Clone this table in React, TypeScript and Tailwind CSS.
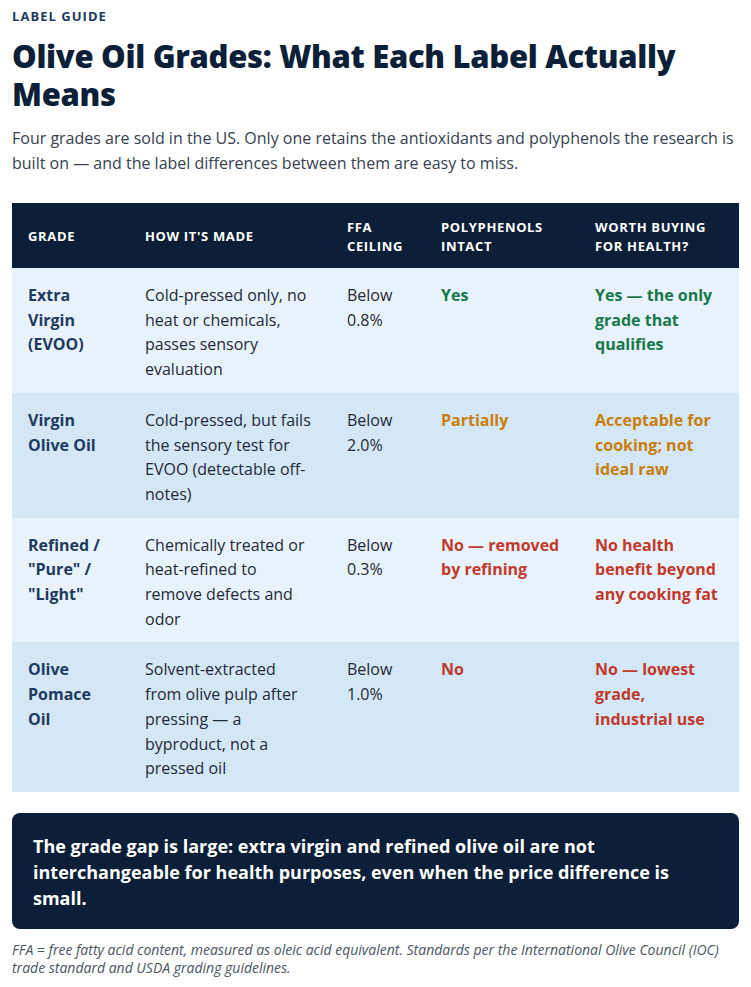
import React from "react";

type Row = {
    grade: string;
    made: string;
    ffa: string;
    poly: string;
    worth: string;
    tone: "good" | "mid" | "bad";
};

const rows: Row[] = [
    {
        grade: "Extra Virgin (EVOO)",
        made: "Cold-pressed only, no heat or chemicals, passes sensory evaluation",
        ffa: "Below 0.8%",
        poly: "Yes",
        worth: "Yes — the only grade that qualifies",
        tone: "good",
    },
    {
        grade: "Virgin Olive Oil",
        made: "Cold-pressed, but fails the sensory test for EVOO (detectable off-notes)",
        ffa: "Below 2.0%",
        poly: "Partially",
        worth: "Acceptable for cooking; not ideal raw",
        tone: "mid",
    },
    {
        grade: 'Refined / "Pure" / "Light"',
        made: "Chemically treated or heat-refined to remove defects and odor",
        ffa: "Below 0.3%",
        poly: "No — removed by refining",
        worth: "No health benefit beyond any cooking fat",
        tone: "bad",
    },
    {
        grade: "Olive Pomace Oil",
        made: "Solvent-extracted from olive pulp after pressing — a byproduct, not a pressed oil",
        ffa: "Below 1.0%",
        poly: "No",
        worth: "No — lowest grade, industrial use",
        tone: "bad",
    },
];

const toneClass = {
    good: "text-[#17784a]",
    mid: "text-[#c97d0b]",
    bad: "text-[#c0392b]",
};

const headers = [
    { label: "Grade", w: "w-[117px]" },
    { label: "How it's made", w: "w-[202px]" },
    { label: "FFA ceiling", w: "w-[94px]" },
    { label: "Polyphenols intact", w: "w-[154px]" },
    { label: "Worth buying for health?", w: "" },
];

const App = () => {
    return (
        <div
            className="bg-white px-3 pt-[7px] pb-4 text-[#1f2937]"
            style={{ fontFamily: '"Open Sans", "Noto Sans", sans-serif' }}
        >
            <div className="text-[13px] font-bold uppercase tracking-[0.08em] text-[#1e3a5f] leading-[18px]">
                Label Guide
            </div>
            <h1 className="mt-[12px] text-[31px] font-extrabold leading-[38px] text-[#0b1f38] tracking-[-0.01em]">
                Olive Oil Grades: What Each Label Actually Means
            </h1>
            <p className="mt-[13px] text-[16px] leading-[25px] text-[#374151]">
                Four grades are sold in the US. Only one retains the antioxidants and polyphenols the research is built on — and the label differences between them are easy to miss.
            </p>

            <table className="mt-[27px] w-full border-collapse text-left">
                <thead>
                    <tr className="bg-[#0b1f38] text-white">
                        {headers.map((h) => (
                            <th
                                key={h.label}
                                className={`${h.w} px-4 pt-[15px] pb-[13px] text-[13px] font-bold uppercase tracking-[0.05em] leading-[18.5px] align-middle`}
                            >
                                {h.label}
                            </th>
                        ))}
                    </tr>
                </thead>
                <tbody>
                    {rows.map((r, i) => (
                        <tr
                            key={r.grade}
                            className={i % 2 === 0 ? "bg-[#e8f2fb]" : "bg-[#d3e7f7]"}
                        >
                            <td className="px-4 pt-[15px] pb-[11px] align-top text-[16px] leading-[24.7px] font-bold text-[#1e3a5f]">
                                {r.grade}
                            </td>
                            <td className="px-4 pt-[15px] pb-[11px] align-top text-[16px] leading-[24.7px] text-[#1f2937]">
                                {r.made}
                            </td>
                            <td className="px-4 pt-[15px] pb-[11px] align-top text-[16px] leading-[24.7px] text-[#1f2937]">
                                {r.ffa}
                            </td>
                            <td className={`px-4 pt-[15px] pb-[11px] align-top text-[16px] leading-[24.7px] font-bold ${toneClass[r.tone]}`}>
                                {r.poly}
                            </td>
                            <td className={`px-4 pt-[15px] pb-[11px] align-top text-[16px] leading-[24.7px] font-bold ${toneClass[r.tone]}`}>
                                {r.worth}
                            </td>
                        </tr>
                    ))}
                </tbody>
            </table>

            <div className="mt-[21px] rounded-lg bg-[#0b1f38] px-[21px] pt-5 pb-[18px] text-[18px] font-bold leading-[26px] text-white">
                The grade gap is large: extra virgin and refined olive oil are not interchangeable for health purposes, even when the price difference is small.
            </div>

            <p className="mt-[12px] text-[14px] italic leading-[18.5px] text-[#4b5563]">
                FFA = free fatty acid content, measured as oleic acid equivalent. Standards per the International Olive Council (IOC) trade standard and USDA grading guidelines.
            </p>
        </div>
    );
};

export default App;
